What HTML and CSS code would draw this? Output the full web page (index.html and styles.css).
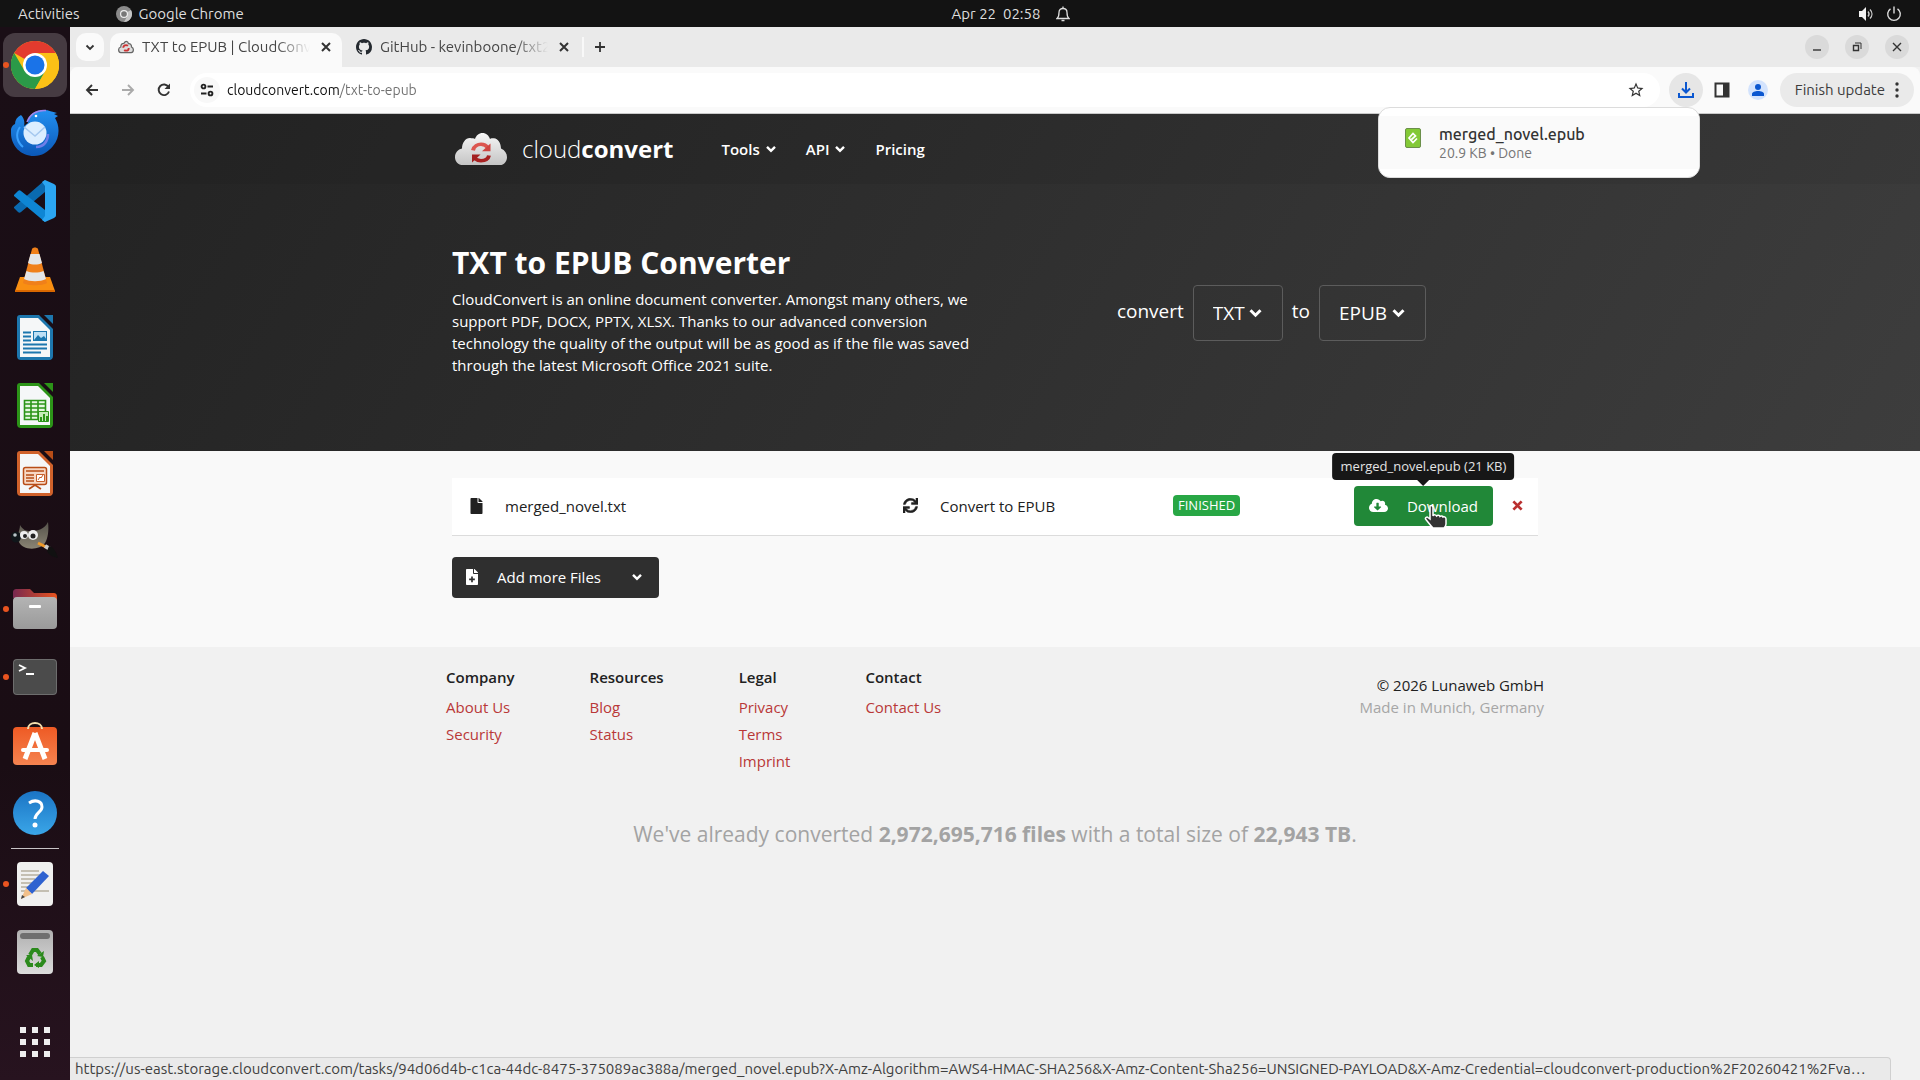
FILE: index.html
```
<!DOCTYPE html>
<html lang="en">
<head>
<meta charset="utf-8">
<meta name="viewport" content="width=device-width, initial-scale=1">
<title>TXT to EPUB | CloudConvert</title>
<link rel="stylesheet" href="styles.css">
</head>
<body>
<svg class="defs" aria-hidden="true">
  <defs>
    <symbol id="chevron" viewBox="0 0 10 8"><path fill="none" stroke="currentColor" stroke-width="2.400" d="M1 1.800l4 4 4-4"/></symbol>
    <symbol id="cross" viewBox="0 0 12 12"><path d="M2 2l8 8M10 2l-8 8" stroke="currentColor" stroke-width="2" fill="none"/></symbol>
    <symbol id="sync" viewBox="0 0 512 512"><path fill="currentColor" stroke="currentColor" stroke-width="16" d="M440.650 12.570l4 82.770A247.160 247.160 0 0 0 255.830 8C134.730 8 33.910 94.920 12.290 209.820A12 12 0 0 0 24.090 224h49.050a12 12 0 0 0 11.670-9.260 175.910 175.910 0 0 1 317-56.940l-101.460-4.860a12 12 0 0 0-12.570 12v47.410a12 12 0 0 0 12 12H500a12 12 0 0 0 12-12V12a12 12 0 0 0-12-12h-47.370a12 12 0 0 0-11.980 12.570zM255.830 432a175.610 175.610 0 0 1-146-77.800l101.800 4.870a12 12 0 0 0 12.570-12v-47.400a12 12 0 0 0-12-12H12a12 12 0 0 0-12 12V500a12 12 0 0 0 12 12h47.350a12 12 0 0 0 12-12.600l-4.150-82.570A247.170 247.170 0 0 0 255.830 504c121.110 0 221.930-86.920 243.550-201.820a12 12 0 0 0-11.800-14.180h-49.050a12 12 0 0 0-11.670 9.260A175.860 175.860 0 0 1 255.830 432z"/></symbol>
    <linearGradient id="cloudFill" x2="0" y2="1"><stop stop-color="#f7f7f7"/><stop offset="1" stop-color="#c4c4c4"/></linearGradient>
    <linearGradient id="arrowFill" x2="0" y2="1"><stop stop-color="#e8605a"/><stop offset="1" stop-color="#9c1a1a"/></linearGradient>
    <symbol id="cloudlogo" viewBox="0 0 52 37">
      <path fill="url(#cloudFill)" d="M8 37C3 37 0 33 0 28c0-5 3-9 7-10C7 11 11 5 16 6c1 0 3 0 4 1 1-4 4-7 7.500-7S34 3 35 7c1-1 2-1 4-1 4 0 7 6 7 12 4 2 6 6 6 10 0 5-3 9-7 9z"/>
      <g fill="none" stroke-width="4"><path stroke="#dc5650" d="M18 20c1-5 5-7 8-7 3 0 5 1 7 4"/><path stroke="#a82222" d="M34 26c-1 5-5 6-8 6-3 0-5-1-7-3"/></g>
      <path fill="#cf4541" d="M35.500 12v9H27z"/><path fill="#a32020" d="M17 34v-9h8.500z"/>
    </symbol>
    <linearGradient id="gBlue" x2="0" y2="1"><stop stop-color="#1b74c4"/><stop offset="1" stop-color="#3aa6e8"/></linearGradient>
    <linearGradient id="gBird" x2="0" y2="1"><stop stop-color="#2390f0"/><stop offset="1" stop-color="#0b58b8"/></linearGradient>
    <linearGradient id="gOrange" x2="0" y2="1"><stop stop-color="#ee5a24"/><stop offset="1" stop-color="#f58350"/></linearGradient>
    <linearGradient id="gGrey" x2="0" y2="1"><stop stop-color="#b4b4b4"/><stop offset="1" stop-color="#9a9a9a"/></linearGradient>
    <linearGradient id="gBin" x2="0" y2="1"><stop stop-color="#b0b0b0"/><stop offset="1" stop-color="#dcdcdc"/></linearGradient>
    <linearGradient id="gFolder"><stop stop-color="#77284f"/><stop offset="1" stop-color="#e9541f"/></linearGradient>
    <linearGradient id="gFur" x2="0" y2="1"><stop stop-color="#55524a"/><stop offset="1" stop-color="#8a8474"/></linearGradient>
  </defs>
</svg>

<header class="topbar">
  <div class="topbar-left">
    <button class="top-btn">Activities</button>
    <button class="top-btn app">
      <svg width="16" height="16" viewBox="0 0 48 48"><circle cx="24" cy="24" r="24" fill="#8b8b8b"/><path d="M24 24 44.800 12A24 24 0 0 1 24 48l10.400-18z" fill="#c4c4c4"/><circle cx="24" cy="24" r="12" fill="#eee"/><circle cx="24" cy="24" r="8.500" fill="#777"/></svg>
      Google Chrome
    </button>
  </div>
  <button class="top-btn clock">Apr 22&nbsp; 02:58
    <svg width="14" height="16" viewBox="0 0 14 16" fill="none" stroke="#ddd" stroke-width="1.300"><path d="M1 12.500c2-1.500 2-3 2-6C3 4 4.500 2.500 7 2.500S11 4 11 6.500c0 3 0 4.500 2 6z"/><path d="M5.500 14.500h3M7 .5v2"/></svg>
  </button>
  <div class="topbar-right">
    <svg width="16" height="16" viewBox="0 0 16 16"><path fill="#f2f2f2" d="M1 5h3l4-4v14l-4-4H1z"/><path d="M10 5.500c1.300 1.500 1.300 3.500 0 5M12 3.500c2.600 2.700 2.600 6.300 0 9" fill="none" stroke="#ccc" stroke-width="1.300"/></svg>
    <svg width="16" height="16" viewBox="0 0 16 16" fill="none" stroke="#ddd" stroke-width="1.400"><path d="M4.500 2.800a6.300 6.300 0 1 0 7 0M8 .5v7"/></svg>
  </div>
</header>

<div class="desktop">
<nav class="dock" aria-label="Dock">
  <a href="#" class="dock-item active running" aria-label="Google Chrome"><svg viewBox="0 0 48 48"><circle cx="24" cy="24" r="24" fill="#fbc116"/><path fill="#e33b2e" d="M24 24 3.200 12A24 24 0 0 1 44.800 12z"/><path fill="#2b9a48" d="M3.200 12A24 24 0 0 0 24 48l10.400-18L24 24 13.600 30z"/><path fill="#fbc116" d="M24 12h20.800A24 24 0 0 1 24 48l10.400-18z"/><circle cx="24" cy="24" r="12" fill="#fff"/><circle cx="24" cy="24" r="9.500" fill="#1a73e8"/></svg></a>
  <a href="#" class="dock-item" aria-label="Thunderbird"><svg viewBox="0 0 48 48"><path fill="url(#gBird)" d="M0 20c1-3 2-4 4-5 0-4 2-7 6-9 3 3 4 7 3 11l4-3C17 6 24 1 33 1c5 0 8 2 13 3l-3 1 4 2-3 2c5 8 5 20-2 28-5 6-11 10-19 10C10 47 0 37 0 24z"/><path fill="none" stroke="#9d86ec" stroke-width="1.500" d="M16 13C19 5 26 1 35 1.500"/><path fill="none" stroke="#3aa2ff" stroke-width="2" d="M9 18c-5 7-3 15 3 20"/><path fill="none" stroke="#6f7fe8" stroke-width="2.500" d="M25 38c8 0 12-6 12-13"/><circle cx="24" cy="24" r="11.500" fill="#dceeff"/><path d="M13 18l11 9 10-9" fill="none" stroke="#a5c8ef" stroke-width="1.600"/><circle cx="25" cy="7" r="1.300" fill="#fff"/></svg></a>
  <a href="#" class="dock-item" aria-label="Visual Studio Code"><svg viewBox="0 0 48 48"><path fill="#0a6ab0" d="M3 31l4 4c1 1 2 1 3 0L34 15V3L3 30z"/><path fill="#0e86d4" d="M3 18l4-4c1-1 2-1 3 0l24 19v12L3 19z"/><path fill="#2ba6f2" d="M34 3l9 4c1.500 1 2 1.500 2 3v28c0 1.500-.5 2-2 3l-9 4-3-2 3-4V9l-3-4z"/></svg></a>
  <a href="#" class="dock-item" aria-label="VLC"><svg viewBox="0 0 48 48"><path fill="#f98f12" d="M9 32h30l5 14H4z"/><path fill="#d96800" d="M4 45h40v2H4z"/><path fill="#f0801a" d="M21 4c1-2 5-2 6 0l9 34c-4 3-20 3-24 0z"/><path fill="#e4e6e8" d="M19.500 9h9l2.500 9c-4 2-10 2-14 0zM15.500 26c5 2 12 2 17 0l2.500 8c-6 3-16 3-22 0z"/></svg></a>
  <a href="#" class="dock-item" aria-label="LibreOffice Writer"><svg viewBox="0 0 48 48"><path fill="#1d77ae" d="M9 2h19l14 14v27c0 2-1 4-4 4H10c-2 0-4-1-4-4V5c0-2 1-3 3-3z"/><path fill="#f5f7f8" d="M9 5h18l12 12v27H9z"/><path fill="#1d77ae" d="M33 2h9v9z"/><path d="M12 19.500h8M12 23.500h8M12 27.500h8M12 31.500h24M12 35.500h24M12 39.500h18" stroke="#1d77ae" stroke-width="2"/><rect x="22.500" y="18.500" width="13" height="9" fill="#bfe0f5" stroke="#1d77ae"/><path fill="#1d77ae" d="M23 27l4-5 3 3 3-2 3 4z"/></svg></a>
  <a href="#" class="dock-item" aria-label="LibreOffice Calc"><svg viewBox="0 0 48 48"><path fill="#2c9418" d="M9 2h19l14 14v27c0 2-1 4-4 4H10c-2 0-4-1-4-4V5c0-2 1-3 3-3z"/><path fill="#f5f7f8" d="M9 5h18l12 12v27H9z"/><path fill="#2c9418" d="M33 2h9v9z"/><path d="M13.500 19.500h21v19h-21zM13.500 23h21M13.500 27h21M13.500 31h21M13.500 35h21M20 19v20M27 19v20" fill="#e6f7e0" stroke="#2c9418" stroke-width="1.600"/><path fill="#c4ecb8" stroke="#2c9418" d="M27.500 30.500h10v10h-10z"/><path stroke="#2c9418" stroke-width="2" d="M30 40v-4M33 40v-7M36 40v-5"/></svg></a>
  <a href="#" class="dock-item" aria-label="LibreOffice Impress"><svg viewBox="0 0 48 48"><path fill="#d0622b" d="M9 2h19l14 14v27c0 2-1 4-4 4H10c-2 0-4-1-4-4V5c0-2 1-3 3-3z"/><path fill="#f5f7f8" d="M9 5h18l12 12v27H9z"/><path fill="#b84d17" d="M33 2h9v9z"/><rect x="12.500" y="18.500" width="23" height="17" rx="2" fill="#f7d8c4" stroke="#b84d17" stroke-width="1.500"/><path d="M15 22h18M15 26h8M15 29h8M15 32h8M18 40l6-4 6 4" stroke="#b84d17" stroke-width="1.700" fill="none"/><path d="M25.500 25.500h8v7h-8zM27 31l2-3 1 1 2-3" fill="#fff" stroke="#c8602a"/></svg></a>
  <a href="#" class="dock-item" aria-label="GIMP"><svg viewBox="0 0 48 48"><path fill="url(#gFur)" d="M9 8c3 5 6 6 10 6 7 0 14-1 18-9 1 8 0 16-3 21-4 6-15 7-21 4-5-2-7-8-6-13 1-3 2-6 2-9z"/><ellipse cx="5" cy="20" rx="5" ry="5.500" fill="#10161a"/><circle cx="4" cy="18" r="1.800" fill="#b9c4c8"/><circle cx="13" cy="18" r="4" fill="#eee"/><circle cx="22" cy="18" r="5" fill="#eee"/><circle cx="14" cy="19" r="2" fill="#222"/><circle cx="22" cy="19" r="2.500" fill="#222"/><path d="M27 26l8 4" stroke="#ef9a2a" stroke-width="3"/><path d="M34 29l5 3" stroke="#ccc" stroke-width="4"/><path fill="#111" d="M38 29c4 1 7 5 9 12-5-1-9-3-11-7z"/></svg></a>
  <a href="#" class="dock-item running" aria-label="Files"><svg viewBox="0 0 48 48"><path fill="url(#gFolder)" d="M2 13V8c0-3 1-4 4-4h13l4 4h19c3 0 4 1 4 4v4z"/><rect x="2" y="12" width="44" height="32" rx="4" fill="url(#gGrey)"/><rect x="18" y="20" width="12" height="3" rx="1" fill="#fff"/></svg></a>
  <a href="#" class="dock-item running" aria-label="Terminal"><svg viewBox="0 0 48 48"><rect x="2" y="6" width="44" height="36" rx="4" fill="#6d6d6d"/><rect x="3" y="7" width="42" height="34" rx="3" fill="#4b4b4b"/><path d="M8 12l6 3-6 3M15 21h8" fill="none" stroke="#fff" stroke-width="1.800"/></svg></a>
  <a href="#" class="dock-item" aria-label="Ubuntu Software"><svg viewBox="0 0 48 48"><rect x="2" y="6" width="44" height="38" rx="4" fill="url(#gOrange)"/><path d="M24 12L14 38M24 12l10 26" stroke="#fff" stroke-width="5" fill="none"/><path d="M12 29h24" stroke="#fff" stroke-width="4" stroke-linecap="round"/><path d="M17 8c0-8 14-8 14 0" fill="none" stroke="#f6dfae" stroke-width="2"/></svg></a>
  <a href="#" class="dock-item" aria-label="Help"><svg viewBox="0 0 48 48"><circle cx="24" cy="24" r="22" fill="url(#gBlue)"/><path d="M18 14c6-4 13-2 13 4 0 5-7 6-7 12" fill="none" stroke="#fff" stroke-width="3"/><circle cx="24" cy="36" r="2.500" fill="#fff"/></svg></a>
  <hr class="dock-sep">
  <a href="#" class="dock-item running" aria-label="Text Editor"><svg viewBox="0 0 48 48"><rect x="6" y="2" width="36" height="44" rx="4" fill="#f0f0ef"/><path d="M10 11h18M10 15h19M10 19h14M10 23h12M10 27h10M10 31h28" stroke="#c4bfb2" stroke-width="1.800"/><path fill="#2f62d0" d="M32 11l6 5-17 18-6-6z"/><path fill="#f2c08a" d="M15 28l6 6-11 5z"/><path fill="#444" d="M11 35l3 2-4 2z"/></svg></a>
  <a href="#" class="dock-item" aria-label="Trash"><svg viewBox="0 0 48 48"><rect x="6" y="2" width="36" height="44" rx="4" fill="url(#gBin)"/><rect x="9" y="5" width="30" height="6" rx="3" fill="#6f6f6f"/><g fill="none" stroke="#2b8a1c" stroke-width="4"><path d="M19 27l3-5h4l3 4"/><path d="M31 29l2 4-3 4h-5"/><path d="M22 37h-4l-2-4 2-4"/></g><path fill="#2b8a1c" d="M26 28l6 1 1-6zM28 33v7l-5-3zM15 27l6 0 1 6z"/></svg></a>
  <button class="dock-item apps" aria-label="Show Applications"><svg viewBox="0 0 48 48" fill="#eee"><path d="M9 9h6v6H9zM21 9h6v6h-6zM33 9h6v6h-6zM9 21h6v6H9zM21 21h6v6h-6zM33 21h6v6h-6zM9 33h6v6H9zM21 33h6v6h-6zM33 33h6v6h-6z"/></svg></button>
</nav>

<div class="browser">
  <div class="tabstrip">
    <button class="tab-search" aria-label="Search tabs"><svg width="10" height="10" viewBox="0 0 10 10"><path d="M1.500 3.500L5 7l3.500-3.500" fill="none" stroke="#333" stroke-width="1.800"/></svg></button>
    <div class="tab current">
      <svg width="16" height="16" viewBox="0 0 52 52"><path fill="#ddd" stroke="#666" stroke-width="4" d="M9 44c-5 0-7-4-7-9s3-8 7-9c0-7 4-12 10-12 2-3 4-6 8-6s6 3 7 7c6-1 10 4 10 11 4 2 6 5 6 9 0 5-3 9-7 9z"/><circle cx="26" cy="29" r="9" fill="none" stroke="#c33" stroke-width="6" stroke-dasharray="20 8"/></svg>
      <span class="tab-title">TXT to EPUB | CloudConv</span>
      <button class="tab-close" aria-label="Close tab"><svg width="12" height="12"><use href="#cross"/></svg></button>
    </div>
    <div class="tab">
      <svg width="16" height="16" viewBox="0 0 16 16"><path fill="#24292f" d="M8 0C3.580 0 0 3.580 0 8c0 3.540 2.290 6.530 5.470 7.590.4.070.55-.17.55-.38 0-.19-.01-.82-.01-1.490-2.010.37-2.530-.49-2.690-.94-.09-.23-.48-.94-.82-1.130-.28-.15-.68-.52-.01-.53.63-.01 1.080.58 1.230.82.72 1.210 1.870.87 2.330.66.070-.52.280-.87.510-1.070-1.780-.2-3.640-.89-3.640-3.950 0-.87.310-1.590.820-2.150-.08-.2-.36-1.020.080-2.120 0 0 .67-.21 2.200.82.640-.18 1.320-.27 2-.27s1.360.09 2 .27c1.530-1.040 2.200-.82 2.200-.82.440 1.100.160 1.920.080 2.120.510.560.820 1.270.820 2.150 0 3.070-1.870 3.750-3.650 3.950.290.250.540.730.540 1.480 0 1.070-.01 1.930-.01 2.200 0 .21.150.460.550.380A8.010 8.010 0 0 0 16 8c0-4.420-3.580-8-8-8z"/></svg>
      <span class="tab-title">GitHub - kevinboone/txt2</span>
      <button class="tab-close" aria-label="Close tab"><svg width="12" height="12"><use href="#cross"/></svg></button>
    </div>
    <button class="new-tab" aria-label="New tab"><svg width="12" height="12" viewBox="0 0 12 12"><path d="M6 1v10M1 6h10" stroke="#333" stroke-width="1.800"/></svg></button>
    <div class="window-buttons">
      <button aria-label="Minimize"><svg width="10" height="10" viewBox="0 0 10 10"><path d="M1 8h8" stroke="#333" stroke-width="1.400"/></svg></button>
      <button aria-label="Restore"><svg width="10" height="10" viewBox="0 0 10 10" fill="none" stroke="#333"><path d="M1.500 3.500h5v5h-5z" stroke-width="1.400"/><path d="M3 1h6v6"/></svg></button>
      <button aria-label="Close"><svg width="10" height="10" viewBox="0 0 10 10"><path d="M1 1l8 8M9 1L1 9" stroke="#333" stroke-width="1.400"/></svg></button>
    </div>
  </div>

  <div class="toolbar">
    <button class="tool" aria-label="Back"><svg width="14" height="14" viewBox="0 0 14 14"><path d="M13 7H2M7 2L2 7l5 5" fill="none" stroke="#333" stroke-width="1.900"/></svg></button>
    <button class="tool" aria-label="Forward" disabled><svg width="14" height="14" viewBox="0 0 14 14"><path d="M1 7h11M7 2l5 5-5 5" fill="none" stroke="#aaa" stroke-width="1.900"/></svg></button>
    <button class="tool" aria-label="Reload"><svg width="14" height="14" viewBox="0 0 14 14"><path d="M12 8.500A5.300 5.300 0 1 1 11.500 4" fill="none" stroke="#333" stroke-width="1.900"/><path d="M13 .5V6H7.500z" fill="#333"/></svg></button>
    <div class="omnibox">
      <button class="site-info" aria-label="Site information"><svg width="14" height="14" viewBox="0 0 14 14" fill="none" stroke="#222" stroke-width="1.900"><circle cx="3.500" cy="3.500" r="1.900"/><path d="M7.500 3.500H13M1 10.500h5.500"/><circle cx="10.500" cy="10.500" r="1.900"/></svg></button>
      <input class="url" type="text" aria-label="Address and search bar" value="cloudconvert.com/txt-to-epub">
      <button class="star" aria-label="Bookmark"><svg width="18" height="18" viewBox="0 0 24 24"><path fill="#333" d="m22 9.240-7.190-.62L12 2 9.190 8.630 2 9.240l5.460 4.730L5.820 21 12 17.270 18.180 21l-1.630-7.030zM12 15.400l-3.760 2.270 1-4.280-3.320-2.880 4.380-.38L12 6.100l1.710 4.040 4.380.38-3.320 2.880 1 4.280z"/></svg></button>
    </div>
    <div class="actions">
      <button class="round shaded" aria-label="Downloads"><svg width="16" height="16" viewBox="0 0 16 16" fill="none" stroke="#0b57d0" stroke-width="2"><path d="M8 0v10M4 6.500l4 4 4-4M1 11v4h14v-4"/></svg></button>
      <button class="round" aria-label="Side panel"><svg width="16" height="16" viewBox="0 0 16 16"><rect x="1.500" y="1.500" width="13" height="13" fill="none" stroke="#333" stroke-width="2"/><path fill="#333" d="M9 1h6v14H9z"/></svg></button>
      <button class="round" aria-label="Profile"><svg width="20" height="20" viewBox="0 0 20 20"><circle cx="10" cy="10" r="10" fill="#d3e3fd"/><circle cx="10" cy="7" r="3" fill="#0b57d0"/><path fill="#0b57d0" d="M4 16v-2c0-2 3-3 6-3s6 1 6 3v2z"/></svg></button>
    </div>
    <button class="update">Finish update <svg width="4" height="16" viewBox="0 0 4 16" fill="#333"><circle cx="2" cy="2" r="1.700"/><circle cx="2" cy="8" r="1.700"/><circle cx="2" cy="14" r="1.700"/></svg></button>
  </div>

  <div class="page">
    <div class="masthead">
      <header class="sitebar">
        <div class="container sitebar-inner">
          <a href="#" class="brand"><svg width="52" height="32" viewBox="0 0 52 37" preserveAspectRatio="none"><use href="#cloudlogo"/></svg><span class="brand-name">cloud<b>convert</b></span></a>
          <nav class="menu" aria-label="Site">
            <a href="#">Tools <svg width="10" height="8"><use href="#chevron"/></svg></a>
            <a href="#">API <svg width="10" height="8"><use href="#chevron"/></svg></a>
            <a href="#">Pricing</a>
          </nav>
        </div>
      </header>
      <section class="container hero">
        <div class="hero-text">
          <h1>TXT to EPUB Converter</h1>
          <p>CloudConvert is an online document converter. Amongst many others, we support PDF, DOCX, PPTX, XLSX. Thanks to our advanced conversion technology the quality of the output will be as good as if the file was saved through the latest Microsoft Office 2021 suite.</p>
        </div>
        <form class="picker">
          <label for="from">convert</label>
          <span class="select"><select id="from"><option>TXT</option></select><svg width="13" height="10"><use href="#chevron"/></svg></span>
          <label for="to">to</label>
          <span class="select"><select id="to"><option>EPUB</option></select><svg width="13" height="10"><use href="#chevron"/></svg></span>
        </form>
      </section>
    </div>

    <main class="container files">
      <div class="file-row">
        <div class="cell name"><svg width="13" height="16" viewBox="0 0 384 512"><path fill="#212121" d="M224 136V0H24C10.700 0 0 10.700 0 24v464c0 13.300 10.700 24 24 24h336c13.300 0 24-10.700 24-24V160H248c-13.200 0-24-10.800-24-24zm160-14.100v6.100H256V0h6.100c6.400 0 12.500 2.500 17 7l97.900 98c4.500 4.500 7 10.600 7 16.900z"/></svg>merged_novel.txt</div>
        <div class="cell task"><svg width="15" height="15"><use href="#sync"/></svg>Convert to EPUB</div>
        <div class="cell state"><span class="badge">FINISHED</span></div>
        <div class="cell acts">
          <div class="download-wrap">
            <button class="btn download" aria-describedby="tip"><svg width="19" height="15" viewBox="0 0 640 512" preserveAspectRatio="none"><path fill="#fff" d="M537.600 226.600c4.100-10.700 6.400-22.400 6.400-34.600 0-53-43-96-96-96-19.700 0-38.100 6-53.300 16.200C367 64.200 315.300 32 256 32c-88.400 0-160 71.600-160 160 0 2.700.1 5.400.2 8.100C40.200 219.800 0 273.200 0 336c0 79.500 64.500 144 144 144h368c70.700 0 128-57.300 128-128 0-61.900-44-113.600-102.400-125.400zm-132.900 88.700L299.300 420.700c-6.200 6.200-16.400 6.200-22.600 0L171.300 315.300c-10.100-10.100-2.900-27.300 11.300-27.300H248V176c0-8.800 7.200-16 16-16h48c8.800 0 16 7.200 16 16v112h65.400c14.200 0 21.400 17.200 11.300 27.300z"/></svg>Download</button>
            <span class="tooltip" role="tooltip" id="tip">merged_novel.epub (21 KB)</span>
            <svg class="pointer" width="24" height="26" viewBox="0 0 24 26"><path fill="#333" stroke="#fff" stroke-width="1.500" d="M6 2c2-1 3 0 3 2v8c1-2 3-1 3.500 0 1-1 3-1 3.500.5 1-.8 3-.5 3 .5 2-.5 3 .5 3 2v5c0 2-2 4-2 4H9c-3-3-5-6-7.500-9C1 13.500 3 12.500 4 13.500L6 15z"/></svg>
          </div>
          <button class="remove" aria-label="Remove file"><svg width="11" height="11" viewBox="0 0 12 12"><path d="M1.500 1.500l9 9M10.500 1.500l-9 9" stroke="#b93030" stroke-width="3"/></svg></button>
        </div>
      </div>
      <div class="add-group">
        <button class="btn add"><svg width="12" height="16" viewBox="0 0 384 512"><path fill="#fff" fill-rule="evenodd" d="M224 136V0H24C10.700 0 0 10.700 0 24v464c0 13.300 10.700 24 24 24h336c13.300 0 24-10.700 24-24V160H248c-13.200 0-24-10.800-24-24zM165 240h54v64h64v54h-64v64h-54v-64h-64v-54h64zM384 121.900v6.100H256V0h6.100c6.400 0 12.500 2.500 17 7l97.900 98c4.500 4.500 7 10.600 7 16.900z"/></svg>Add more Files</button>
        <button class="btn add-more" aria-label="More sources"><svg width="10" height="8"><use href="#chevron"/></svg></button>
      </div>
    </main>

    <footer class="footer">
      <div class="footer-top">
        <div class="link-cols">
          <section><h2>Company</h2><a href="#">About Us</a><a href="#">Security</a></section>
          <section><h2>Resources</h2><a href="#">Blog</a><a href="#">Status</a></section>
          <section><h2>Legal</h2><a href="#">Privacy</a><a href="#">Terms</a><a href="#">Imprint</a></section>
          <section><h2>Contact</h2><a href="#">Contact Us</a></section>
        </div>
        <div class="legal">© 2026 Lunaweb GmbH<br><span>Made in Munich, Germany</span></div>
      </div>
      <p class="stats">We've already converted <b>2,972,695,716 files</b> with a total size of <b>22,943 TB</b>.</p>
    </footer>
  </div>

  <div class="download-popup">
    <div class="download-item">
      <svg width="16" height="20" viewBox="0 0 16 20"><rect x=".5" y=".5" width="15" height="19" rx="1.500" fill="#83c936" stroke="#6b8f4a"/><path d="M6.500 11.500l4-3.500-2.500-2.500L4 10l4 4.500 4-4" fill="none" stroke="#fff" stroke-width="1.700"/></svg>
      <div><strong>merged_novel.epub</strong><span>20.9 KB • Done</span></div>
    </div>
  </div>
  <div class="statusbar">https://us-east.storage.cloudconvert.com/tasks/94d06d4b-c1ca-44dc-8475-375089ac388a/merged_novel.epub?X-Amz-Algorithm=AWS4-HMAC-SHA256&amp;X-Amz-Content-Sha256=UNSIGNED-PAYLOAD&amp;X-Amz-Credential=cloudconvert-production%2F20260421%2Fva…</div>
</div>
</div>
</body>
</html>
```
FILE: styles.css
```
* { box-sizing: border-box; }
body {
  margin: 0;
  min-height: 100vh;
  display: flex;
  flex-direction: column;
  font: 15px/22px "Open Sans", "Noto Sans", sans-serif;
  color: #212121;
  background: #f1f1f1;
}
button, input, select { font: inherit; color: inherit; background: none; border: 0; padding: 0; margin: 0; }
a { text-decoration: none; color: inherit; }
svg { display: block; flex: none; }
.defs { position: absolute; width: 0; height: 0; }

/* system bar */
.topbar {
  height: 27px;
  display: grid;
  grid-template-columns: 1fr auto 1fr;
  align-items: center;
  padding: 0 18px;
  background: #131313;
  color: #dedede;
  font: 15px/20px Ubuntu, "Noto Sans", sans-serif;
}
.topbar-left { display: flex; gap: 36px; }
.top-btn { display: flex; align-items: center; gap: 7px; }
.clock { gap: 16px; margin-left: 102px; }
.topbar-right { display: flex; justify-content: flex-end; gap: 12px; }

.desktop { flex: 1; display: flex; }

/* dock */
.dock {
  width: 70px;
  display: flex;
  flex-direction: column;
  align-items: center;
  gap: 4px;
  padding: 6px 0;
  background: linear-gradient(#1a0e16, #1a0d14 70%, #27131f);
}
.dock-item { position: relative; width: 64px; height: 64px; padding: 8px; border-radius: 12px; }
.dock-item svg { width: 48px; height: 48px; }
.dock-item.active { background: #463b42; }
.dock-item.running::before {
  content: "";
  position: absolute;
  left: 0;
  top: 29px;
  width: 6px;
  height: 6px;
  border-radius: 50%;
  background: #e95420;
}
.dock-sep { width: 48px; height: 1px; margin: -1px 0; border: 0; background: #c8c4c6; }
.apps { margin-top: auto; }

/* browser window */
.browser {
  position: relative;
  flex: 1;
  min-width: 0;
  display: flex;
  flex-direction: column;
  font-family: Ubuntu, "Noto Sans", sans-serif;
}
.tabstrip {
  height: 40px;
  display: flex;
  align-items: center;
  padding: 0 11px 0 6px;
  background: #eaeaea;
  color: #454545;
}
.tab-search {
  width: 28px;
  height: 28px;
  margin-right: 6px;
  display: grid;
  place-items: center;
  border-radius: 10px;
  background: #fafafa;
}
.tab {
  align-self: flex-end;
  width: 232px;
  height: 34px;
  display: flex;
  align-items: center;
  gap: 8px;
  padding: 0 8px 6px;
  border-radius: 10px 10px 0 0;
}
.tab.current { background: #fafafa; }
.tab + .tab { padding: 0 2px 6px 14px; }
.tab-title {
  flex: 1;
  min-width: 0;
  overflow: hidden;
  white-space: nowrap;
  mask-image: linear-gradient(to right, #000 80%, transparent);
}
.tab-close { width: 16px; height: 16px; display: grid; place-items: center; color: #333; }
.new-tab { width: 34px; height: 20px; display: grid; place-items: center; border-left: 2px solid #f8f8f8; margin-left: 8px; }
.window-buttons { margin-left: auto; display: flex; gap: 16px; }
.window-buttons button { width: 24px; height: 24px; display: grid; place-items: center; border-radius: 50%; background: #dadada; }

.toolbar {
  height: 47px;
  display: flex;
  align-items: center;
  padding: 0 6px 0 4px;
  background: #fafafa;
  border-bottom: 1px solid #c9c9c9;
  border-radius: 8px 8px 0 0;
}
.tool { width: 36px; height: 34px; display: grid; place-items: center; }
.omnibox { flex: 1; height: 34px; margin-left: 8px; display: flex; align-items: center; padding: 0 15px 0 4px; border-radius: 17px; background: #fff; }
.site-info { width: 26px; height: 26px; display: grid; place-items: center; border-radius: 50%; background: #f8f8f8; }
.url {
  flex: 1;
  margin-left: 7px;
  font-size: 14px;
  color: transparent;
  background: linear-gradient(to right, #111 113px, #6e6e6e 113px);
  background-clip: text;
}
.actions { display: flex; gap: 2px; margin: 0 5px 0 9px; }
.round { width: 34px; height: 34px; display: grid; place-items: center; border-radius: 50%; }
.shaded { background: #e6e6e6; }
.update { height: 34px; display: flex; align-items: center; gap: 10px; padding: 0 15px; border-radius: 17px; background: #eaeaea; color: #3c3c3c; }

/* web page */
.page { flex: 1; display: flex; flex-direction: column; font-family: "Open Sans", "Noto Sans", sans-serif; background: #f9f9f9; }
.container { width: 100%; max-width: 1110px; margin: 0 auto; padding: 0 12px; }
.masthead { color: #fff; background: linear-gradient(120deg, #232323, #2e2e2e 45%, #3d3d3d); }
.sitebar { background: rgba(0, 0, 0, .05); }
.sitebar-inner { height: 70px; display: flex; align-items: center; padding-left: 15px; }
.brand { display: flex; align-items: center; gap: 15px; font-size: 24px; }
.brand-name { font-weight: 300; }
.brand b { font-weight: 700; }
.menu { display: flex; gap: 30px; margin-left: 48px; font-weight: 600; }
.menu a { display: flex; align-items: center; gap: 6px; }
.hero { height: 267px; display: flex; justify-content: space-between; padding-top: 59px; }
.hero-text { width: 530px; }
.hero h1 { margin: 0 0 5px; font-size: 30px; line-height: 40px; font-weight: 700; }
.hero p { margin: 0; }
.picker { display: flex; align-items: center; gap: 9px; height: 56px; margin-top: 42px; margin-right: 112px; font-size: 19px; }
.picker label { padding-bottom: 4px; }
.select { position: relative; display: flex; align-items: center; }
.select select { appearance: none; height: 56px; padding: 0 37px 0 19px; border: 1px solid #5c5c5c; border-radius: 4px; }
.select svg { position: absolute; right: 21px; pointer-events: none; }

.files { padding-top: 27px; padding-bottom: 49px; }
.file-row { height: 58px; display: grid; grid-template-columns: 433px 270px 1fr auto; align-items: center; padding: 0 15px 2px 18px; background: #fff; border-bottom: 1px solid #dcdcdc; }
.cell { display: flex; align-items: center; gap: 22px; }
.badge { padding: 0 5px; border-radius: 4px; background: #28a745; color: #fff; font-size: 13px; line-height: 21px; }
.acts { gap: 18px; }
.btn { display: flex; align-items: center; height: 40px; border-radius: 4px; color: #fff; }
.download-wrap { position: relative; }
.download { gap: 19px; padding: 0 15px; background: #218838; }
.tooltip {
  position: absolute;
  bottom: 46px;
  left: 50%;
  transform: translateX(-50%);
  padding: 0 8px;
  border-radius: 4px;
  background: #171717;
  color: #e4e4e4;
  font-size: 13px;
  line-height: 27px;
  white-space: nowrap;
}
.tooltip::after { content: ""; position: absolute; top: 100%; left: 50%; margin-left: -6px; border: 6px solid transparent; border-top-color: #171717; border-bottom: 0; }
.pointer { position: absolute; left: 70px; top: 18px; }
.remove { width: 12px; height: 22px; display: grid; place-items: center; }
.add-group { display: inline-flex; margin-top: 21px; border-radius: 4px; background: #2f2f2f; }
.add-group .btn { height: 41px; padding: 0 17px 2px; }
.add-group .add { gap: 19px; padding: 0 14px 2px; }

.footer { flex: 1; padding-top: 18px; background: #f1f1f1; }
.footer-top { max-width: 1110px; margin: 0 auto; padding: 0 6px; display: flex; justify-content: space-between; }
.link-cols { display: flex; gap: 75px; }
.link-cols section { display: flex; flex-direction: column; line-height: 27px; color: #b93838; }
.link-cols h2 { margin: 0 0 5px; font-size: 15px; line-height: 24px; font-weight: 600; color: #212121; }
.legal { padding-top: 9px; text-align: right; }
.legal span { color: #a6a6a6; }
.stats { margin: 42px 0 0; text-align: center; font-size: 21px; line-height: 34px; color: #a3a3a3; }

/* browser overlays */
.download-popup {
  position: absolute;
  top: 80px;
  right: 220px;
  width: 322px;
  padding: 8px 0;
  border: 1px solid #dcdcdc;
  border-radius: 12px;
  background: #fff;
}
.download-item { display: flex; gap: 18px; height: 53px; padding: 12px 26px; background: #fafafa; color: #333; }
.download-item div { display: flex; flex-direction: column; margin-top: -4px; line-height: 20px; }
.download-item strong { font-weight: 500; font-size: 16px; }
.download-item span { font-size: 14px; line-height: 18px; color: #757575; }
.statusbar {
  position: absolute;
  left: 0;
  right: 29px;
  bottom: 0;
  overflow: hidden;
  padding: 0 5px;
  border: 1px solid #d0d0d0;
  border-width: 1px 1px 0 0;
  border-radius: 0 4px 0 0;
  background: #eaeaea;
  color: #404040;
  white-space: nowrap;
}
```
